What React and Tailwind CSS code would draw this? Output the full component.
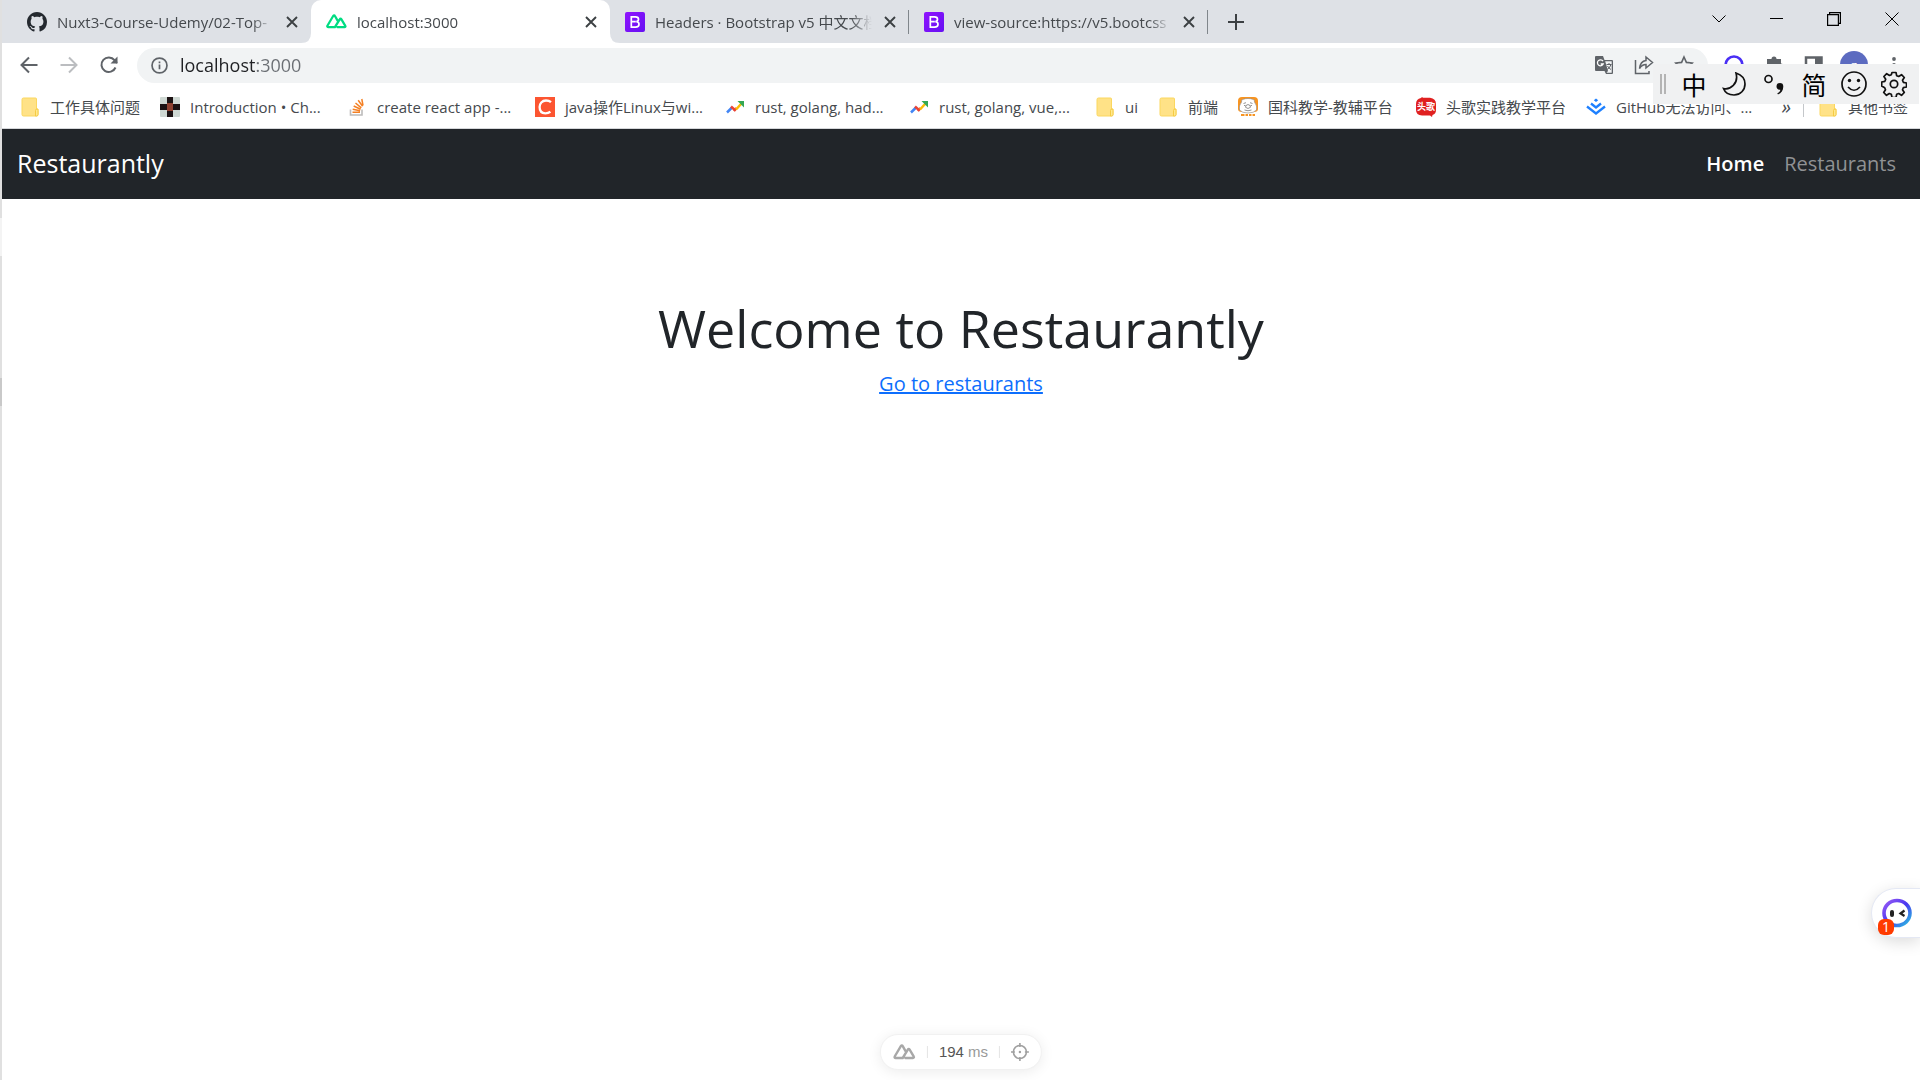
import React from "react";

const cjk = "font-['Open_Sans','Noto_Sans_CJK_SC',sans-serif]";

function GitHub() {
  return (
    <svg viewBox="0 0 16 16" className="size-5 shrink-0" fill="#24292f">
      <path d="M8 0C3.58 0 0 3.58 0 8c0 3.54 2.29 6.53 5.47 7.59.4.07.55-.17.55-.38 0-.19-.01-.82-.01-1.49-2.01.37-2.53-.49-2.69-.94-.09-.23-.48-.94-.82-1.13-.28-.15-.68-.52-.01-.53.63-.01 1.08.58 1.23.82.72 1.21 1.87.87 2.33.66.07-.52.28-.87.51-1.07-1.78-.2-3.64-.89-3.64-3.95 0-.87.31-1.59.82-2.15-.08-.2-.36-1.02.08-2.12 0 0 .67-.21 2.2.82.64-.18 1.32-.27 2-.27s1.36.09 2 .27c1.53-1.04 2.2-.82 2.2-.82.44 1.1.16 1.92.08 2.12.51.56.82 1.27.82 2.15 0 3.07-1.87 3.75-3.65 3.95.29.25.54.73.54 1.48 0 1.07-.01 1.93-.01 2.2 0 .21.15.46.55.38A8.01 8.01 0 0 0 16 8c0-4.42-3.58-8-8-8z" />
    </svg>
  );
}

function Nuxt({ color, className }) {
  return (
    <svg viewBox="0 0 22 16" className={className} fill="none" stroke={color} strokeWidth="2.400" strokeLinejoin="round" strokeLinecap="round">
      <path d="M12 14h7.6c.8 0 1.200-.8.8-1.400l-4.300-7.200c-.4-.6-1.200-.6-1.500 0L9.300 14H2.200c-.8 0-1.300-.8-.9-1.500L7.600 1.900c.4-.6 1.300-.6 1.600 0L12 6.800" />
    </svg>
  );
}

function Bootstrap() {
  return (
    <svg viewBox="0 0 20 20" className="size-5 shrink-0">
      <defs>
        <linearGradient id="bs" x1="0" y1="0" x2="1" y2="1">
          <stop offset="0" stopColor="#9013fe" />
          <stop offset="1" stopColor="#6610f2" />
        </linearGradient>
      </defs>
      <rect width="20" height="20" rx="2" fill="url(#bs)" />
      <path d="M6.300 4.800h4.200c2 0 3 .9 3 2.400 0 1.300-.9 2.200-2.200 2.400 1.700.1 2.700 1.200 2.700 2.600 0 1.900-1.300 2.900-3.500 2.900H6.300zM6.300 9.600h4.500" fill="none" stroke="#fff" strokeWidth="1.700" />
    </svg>
  );
}

function Folder() {
  return (
    <svg viewBox="0 0 20 20" className="size-5 shrink-0">
      <path d="M2 2.500Q2 1 3.500 1H15.500Q16.500 1 16.500 2V12h1.500v5.500Q18 19 16.500 19H3.500Q2 19 2 17.500z" fill="#ffe287" stroke="#fbd75f" strokeWidth="1" />
      <path d="M15.500 19v-5.500q0-1.500 1.500-1.500t1 1.500v4q0 1.500-1.500 1.500z" fill="#ffe98f" stroke="#f5cb44" strokeWidth="1" />
    </svg>
  );
}

function Checker() {
  return (
    <svg viewBox="0 0 20 20" className="size-5 shrink-0">
      <rect width="20" height="20" rx="1" fill="#cfd8d3" />
      <path d="M7 0h6v6H7zM0 7h7v6H0zM13 7h7v6h-7zM7 14h6v6H7z" fill="#1c1213" />
      <path d="M7 6h6v8H7z" fill="#8d4030" />
    </svg>
  );
}

function Stack() {
  return (
    <svg viewBox="0 0 20 20" className="size-5 shrink-0" fill="none">
      <path d="M3.500 12.500V18h11.500v-5.500" stroke="#bcbbbb" strokeWidth="1.600" />
      <path d="M5.500 15.300h7.500M5.700 12.200l7.400 1.500M6.700 9l6.900 3.200M8.500 6l5.800 4.900M11.200 3.200l4.400 6.100M14.800 2l1.200 6.500" stroke="#f48024" strokeWidth="1.500" />
    </svg>
  );
}

function CBox() {
  return (
    <svg viewBox="0 0 20 20" className="size-5 shrink-0">
      <path d="M0 0h20v20H0z" fill="#fc5531" />
      <path d="M16 5.200C14.500 3.900 12.900 3.500 11 3.500c-4 0-6.400 2.900-6.400 6.600 0 3.900 2.300 6.200 5.800 6.200 1.900 0 3.600-.5 5-1.500" fill="none" stroke="#fff" strokeWidth="2.300" />
    </svg>
  );
}

function Trend() {
  return (
    <svg viewBox="0 0 20 20" className="size-5 shrink-0" fill="none" strokeWidth="2.500">
      <path d="M2 15.500l5-5" stroke="#4285f4" />
      <path d="M6 9.500l4.500 4" stroke="#ea4335" />
      <path d="M9 14l2.500-3" stroke="#ea4335" />
      <path d="M11 12.500l5.500-6" stroke="#fbbc04" />
      <path d="M12.500 4H19v6.500z" fill="#34a853" />
    </svg>
  );
}

function Bear() {
  return (
    <svg viewBox="0 0 20 20" className="size-5 shrink-0">
      <path d="M4 0h12q4 0 4 4v8q0 3-4 3H4q-4 0-4-3V4q0-4 4-4z" fill="#f79421" />
      <path d="M3.500 5Q3 2 5.500 2.300 7 1.500 10 1.500t4.500.8Q17 2 16.500 5 19.500 9 18.500 13 16 16 10 16T1.500 13Q.5 9 3.500 5z" fill="#fff" stroke="#8b8179" strokeWidth=".6" />
      <path d="M5.500 6.500l2.500-.8M14.500 6.500L12 5.700M6 8.500h1.500M12.500 8.500H14M8 8.500q2-2 4 0t-2 3q-4-1-2-3zM6.500 13q3.500 1.500 7 0" fill="none" stroke="#777" strokeWidth=".8" />
      <path d="M3 18h3.500M7.500 18H10M11 18h2.500M14.500 18H17" stroke="#f79421" strokeWidth="2.200" />
    </svg>
  );
}

function TouGe() {
  return (
    <span className="relative flex size-5 shrink-0 items-center justify-center">
      <svg viewBox="0 0 20 20" className="absolute inset-0 size-5">
        <path d="M5 1l1-1 1 .8h7Q20 1.500 20 7v6q0 4-3.500 5l-.5 2-2-1.500H6Q0 18 0 13V7q0-5 5-6z" fill="#e02020" />
      </svg>
      <span className="relative font-['Noto_Sans_CJK_SC',sans-serif] text-[9px] leading-none font-bold text-white">头歌</span>
    </span>
  );
}

function Chevrons() {
  return (
    <svg viewBox="0 0 20 20" className="size-5 shrink-0" fill="none" stroke="#1e80ff" strokeWidth="2.300">
      <path d="M1 9.500l9 7 9-7M5 6.500l5 4 5-4" />
      <path d="M10 1.500l2.200 1.800L10 5.100 7.800 3.300z" fill="#1e80ff" stroke="none" />
    </svg>
  );
}

function Close() {
  return (
    <button aria-label="Close tab" className="flex size-5 shrink-0 items-center justify-center">
      <svg viewBox="0 0 12 12" className="size-3" stroke="#3c4043" strokeWidth="1.900">
        <path d="M1 1l10 10M11 1L1 11" />
      </svg>
    </button>
  );
}

function Tab({ icon, title, active, divider }) {
  return (
    <div className={"relative flex w-[299px] min-w-0 items-center pr-[9px] pl-[15px] " + (active ? "rounded-t-[10px] bg-white" : "")}>
      {active && (
        <>
          <svg viewBox="0 0 10 10" className="absolute bottom-0 -left-2.5 size-2.5" fill="#fff"><path d="M10 0v10H0Q10 10 10 0z" /></svg>
          <svg viewBox="0 0 10 10" className="absolute -right-2.5 bottom-0 size-2.5" fill="#fff"><path d="M0 0v10h10Q0 10 0 0z" /></svg>
        </>
      )}
      {icon}
      <span className="ml-2.5 min-w-0 flex-1 overflow-hidden mask-r-from-90% text-[15px] leading-6 whitespace-nowrap text-[#45494d]">{title}</span>
      <span className="ml-2"><Close /></span>
      {divider && <span className="absolute top-2.5 right-0 h-6 w-px bg-[#80868b]" />}
    </div>
  );
}

const bookmarks = [
  ["w-[140px]", <Folder />, "工作具体问题"],
  ["w-[187px]", <Checker />, "Introduction • Ch..."],
  ["w-[188px]", <Stack />, "create react app -..."],
  ["w-[190px]", <CBox />, "java操作Linux与wi..."],
  ["w-[184px]", <Trend />, "rust, golang, had..."],
  ["w-[186px]", <Trend />, "rust, golang, vue,..."],
  ["w-[63px]", <Folder />, "ui"],
  ["w-[80px]", <Folder />, "前端"],
  ["w-[178px]", <Bear />, "国科教学-教辅平台"],
  ["w-[170px]", <TouGe />, "头歌实践教学平台"],
  ["w-[180px]", <Chevrons />, "GitHub无法访问、..."],
];

function Key({ label, children }) {
  return <button aria-label={label} className="flex size-10 items-center justify-center">{children}</button>;
}

function InputBar() {
  return (
    <div className="absolute top-16 right-px flex h-10 items-center bg-[#f0f1f2] pr-[5px] font-['Noto_Sans_CJK_SC',sans-serif] text-[25px] leading-none text-black">
      <span className="mr-2 ml-[7px] h-5 w-1.5 border-x-2 border-[#b4b4b4]" />
      <Key label="Chinese">中</Key>
      <Key label="Half width">
        <svg viewBox="0 0 24 24" className="size-6" fill="none" stroke="#111" strokeWidth="1.700"><path d="M14 1C20 3 23 7 23 12c0 6-4.500 11-11 11-5 0-9-2.500-10.500-6.500C8 18 17 12 14 1z" /></svg>
      </Key>
      <Key label="Punctuation">
        <svg viewBox="0 0 24 24" className="size-6"><circle cx="6.500" cy="7" r="3.500" fill="none" stroke="#111" strokeWidth="1.700" /><path d="M14.500 14.500a3.400 3.400 0 0 1 6.800 0c0 4-2 6.500-5.300 8l-.7-1.200c2-.9 2.900-2 3-3.600-2.200.5-3.800-1.200-3.800-3.200z" fill="#111" /></svg>
      </Key>
      <Key label="Simplified">简</Key>
      <Key label="Emoji">
        <svg viewBox="0 0 26 26" className="size-[26px]" fill="none" stroke="#111" strokeWidth="1.700"><circle cx="13" cy="13" r="12" /><path d="M7 16q6 6.500 12 0" /><circle cx="8.500" cy="9.500" r="1.700" fill="#111" stroke="none" /><circle cx="17.500" cy="9.500" r="1.700" fill="#111" stroke="none" /></svg>
      </Key>
      <Key label="Settings">
        <svg viewBox="0 0 26 26" className="size-[26px]" fill="none" stroke="#111" strokeWidth="1.700" strokeLinejoin="round">
          <path d="M11 1.500h4l.7 3.200 2 .8 2.800-1.800 2.800 2.800-1.800 2.800.8 2 3.200.7v4l-3.200.7-.8 2 1.800 2.800-2.800 2.800-2.800-1.800-2 .8-.7 3.200h-4l-.7-3.200-2-.8-2.800 1.800-2.800-2.800 1.800-2.800-.8-2L.7 15v-4l3.200-.7.8-2L2.900 5.500l2.800-2.800 2.800 1.800 1.800-.8z" />
          <circle cx="13" cy="13" r="3.700" />
        </svg>
      </Key>
    </div>
  );
}

function TabStrip() {
  return (
    <div className="flex h-[43px] bg-[#dee1e6] pl-2.5">
      <Tab icon={<GitHub />} title="Nuxt3-Course-Udemy/02-Top-" />
      <Tab icon={<Nuxt color="#00dc82" className="h-[15px] w-[21px] shrink-0" />} title="localhost:3000" active />
      <Tab icon={<Bootstrap />} title="Headers · Bootstrap v5 中文文档" divider />
      <Tab icon={<Bootstrap />} title="view-source:https://v5.bootcss" divider />
      <button aria-label="New tab" className="flex w-14 items-center justify-center">
        <svg viewBox="0 0 16 16" className="size-4" stroke="#3c4043" strokeWidth="2"><path d="M8 0v16M0 8h16" /></svg>
      </button>
      <div className="ml-auto flex h-[37px] text-black">
        <button aria-label="Search tabs" className="flex w-14 items-center justify-center"><svg viewBox="0 0 14 8" className="h-2 w-3.5" fill="none" stroke="#000"><path d="M.5.500l6.500 6.500L13.500.500" /></svg></button>
        <button aria-label="Minimize" className="flex w-[58px] items-center justify-center"><span className="h-px w-[13px] bg-black" /></button>
        <button aria-label="Restore" className="flex w-[58px] items-center justify-center"><svg viewBox="0 0 14 14" className="size-3.5" fill="none" stroke="#000" strokeWidth="1.200"><path d="M.6 2.600h10.800v10.800H.6zM2.600 2.600V.6h10.800v10.800h-2" /></svg></button>
        <button aria-label="Close" className="flex w-[57px] items-center justify-center"><svg viewBox="0 0 14 14" className="size-3.5" stroke="#000"><path d="M.5.500l13 13M13.500.500l-13 13" /></svg></button>
      </div>
    </div>
  );
}

function Toolbar() {
  return (
    <div className="flex h-11 items-center pr-4 pl-[17px]">
      <div className="flex items-center gap-5">
        <button aria-label="Back"><svg viewBox="0 0 20 20" className="size-5" fill="none" stroke="#5f6368" strokeWidth="2"><path d="M18.500 10H3M10 2.500L2.500 10l7.500 7.500" /></svg></button>
        <button aria-label="Forward"><svg viewBox="0 0 20 20" className="size-5" fill="none" stroke="#bbbdc0" strokeWidth="2"><path d="M1.500 10H17M10 2.500l7.500 7.500-7.500 7.500" /></svg></button>
        <button aria-label="Reload"><svg viewBox="0 0 20 20" className="size-5" fill="none" stroke="#5f6368" strokeWidth="2"><path d="M16.500 12.500A7.300 7.300 0 1 1 15.500 5.200L18 8" /><path d="M18.500 1.500v7h-7z" fill="#5f6368" stroke="none" /></svg></button>
      </div>
      <div className="ml-[18px] flex h-[35px] flex-1 items-center rounded-full bg-[#f1f3f4] pr-3.5 pl-3.5">
        <svg viewBox="0 0 18 18" className="size-[17px] shrink-0" fill="none" stroke="#5f6368" strokeWidth="1.800"><circle cx="9" cy="9" r="7.900" /><path d="M9 8v5M9 4.700v1.800" /></svg>
        <input
          aria-label="Address"
          defaultValue="localhost:3000"
          className="ml-3 h-6 min-w-0 flex-1 bg-linear-to-r from-[#202124] from-[77px] to-[#6b6f74] to-[77px] bg-clip-text text-[18px] leading-6 text-transparent outline-none"
        />
        <div className="flex items-center gap-5">
          <button aria-label="Translate">
            <svg viewBox="0 0 20 20" className="size-5"><path d="M2 1h7l1.500 4H18q1 0 1 1v12q0 1-1 1h-6l-1.500-3H2q-1 0-1-1V2q0-1 1-1z" fill="#5f6368" /><path d="M11.200 6.300H17.700V17.700H12.500L14 16z" fill="#f1f3f4" /><path d="M9 6.200A3 3 0 1 0 9.200 9H6.700" fill="none" stroke="#fff" strokeWidth="1.300" /><path d="M12.500 9.500h5M15 8v1.500M17 9.500q-1 3.500-4 5M13.500 11q1.500 2.500 3.500 3.500" fill="none" stroke="#5f6368" /></svg>
          </button>
          <button aria-label="Share"><svg viewBox="0 0 20 20" className="size-5" fill="none" stroke="#5f6368" strokeWidth="1.500"><path d="M1.500 5v13.500h13.500V16M12 2l6.500 5.500L12 13v-3.500c-3 0-5 1.500-6.500 4C6 9 8 6 12 5.500z" /></svg></button>
          <button aria-label="Bookmark"><svg viewBox="0 0 20 20" className="size-5" fill="none" stroke="#5f6368" strokeWidth="1.600"><path d="M10 2l2.400 5.400 5.800.6-4.300 4 1.200 5.800-5.100-3-5.100 3 1.200-5.800-4.300-4 5.800-.6z" /></svg></button>
        </div>
      </div>
      <div className="ml-4 flex items-center gap-5">
        <button aria-label="Assistant"><svg viewBox="0 0 20 20" className="size-5"><circle cx="10" cy="10" r="8.500" fill="#fff" stroke="#4a2ff5" strokeWidth="2.600" /></svg></button>
        <button aria-label="Extensions"><svg viewBox="0 0 20 20" className="size-5" fill="#5f6368"><path d="M3 4h4.500a2.500 2.500 0 0 1 5 0H17v4.500a2.500 2.500 0 0 1 0 5V18H3z" /></svg></button>
        <button aria-label="Side panel"><svg viewBox="0 0 20 20" className="size-5"><path d="M2 2.500h15.500v15H2z" fill="#fff" stroke="#5f6368" strokeWidth="2.500" /><path d="M11 3h7v14h-7z" fill="#5f6368" /></svg></button>
        <button aria-label="Profile" className="-mx-1 flex size-7 items-center justify-center rounded-full bg-[#5c6bc0] text-[13px] leading-none text-white">z</button>
        <button aria-label="Menu"><svg viewBox="0 0 20 20" className="size-5" fill="#5f6368"><circle cx="10" cy="4" r="1.900" /><circle cx="10" cy="10" r="1.900" /><circle cx="10" cy="16" r="1.900" /></svg></button>
      </div>
    </div>
  );
}

function Bookmarks() {
  return (
    <div className={"flex h-[42px] items-center overflow-hidden border-b border-[#d5d7da] pr-3 pb-0.5 pl-[18px] text-[15px] leading-6 whitespace-nowrap text-[#45494d] " + cjk}>
      {bookmarks.map(([w, icon, label], i) => (
        <a key={i} href="#" className={"flex shrink-0 items-center gap-2.5 " + w}>{icon}{label}</a>
      ))}
      <button aria-label="More bookmarks" className="ml-auto text-[20px] italic">»</button>
      <span className="mr-3.5 ml-3 h-5 w-px bg-[#c4c7ca]" />
      <a href="#" className="flex shrink-0 items-center gap-2.5"><Folder />其他书签</a>
    </div>
  );
}

export default function App() {
  return (
    <div className={"flex min-h-screen bg-white " + cjk}>
      <div className="flex w-0.5 shrink-0 flex-col bg-[#e0e0e0]">
        <span className="h-[218px]" />
        <span className="h-[38px] bg-[#f4f4f4]" />
        <span className="h-[122px]" />
        <span className="h-7 bg-[#c9c9c9]" />
      </div>
      <div className="relative flex min-w-0 flex-1 flex-col">
        <TabStrip />
        <Toolbar />
        <Bookmarks />
        <InputBar />
        <nav className="flex h-[70px] items-center justify-between bg-[#212529] pr-6 pb-0.5 pl-[15px] text-white">
          <a href="#" className="text-[25px] leading-10 font-medium">Restaurantly</a>
          <div className="flex gap-5 pt-0.5 text-[20px] leading-8">
            <a href="#" className="font-semibold">Home</a>
            <a href="#" className="text-[#909294]">Restaurants</a>
          </div>
        </nav>
        <main className="flex flex-1 flex-col items-center pt-[97px] text-[#212529]">
          <h1 className="text-[52px] leading-[64px]">Welcome to Restaurantly</h1>
          <a href="#" className="mt-2 text-[20px] leading-8 text-[#0d6efd] underline">Go to restaurants</a>
        </main>
        <div className="absolute right-0 bottom-[142px] flex h-[50px] w-[49px] items-center rounded-l-full border border-r-0 border-[#e4e8f4] bg-white pl-2.5 shadow-[0_4px_16px_rgba(0,0,0,0.14)]">
          <svg viewBox="0 0 30 30" className="size-[30px]">
            <defs><linearGradient id="bot" x1="0" y1="0" x2="1" y2="1"><stop offset="0" stopColor="#9a5cf5" /><stop offset=".5" stopColor="#4836f0" /><stop offset="1" stopColor="#28c4e0" /></linearGradient></defs>
            <ellipse cx="15" cy="15" rx="13" ry="12.500" fill="#fff" stroke="url(#bot)" strokeWidth="3.600" />
            <rect x="8" y="12" width="4" height="7" rx="2" fill="#222" />
            <path d="M22.500 12.500l-4 3 4 2.500" fill="none" stroke="#222" strokeWidth="2.200" />
          </svg>
          <span className="absolute bottom-0.5 left-1.5 flex size-4 items-center justify-center rounded-[6px] bg-[#ff3b00] text-[14px] leading-none text-white">1</span>
        </div>
        <div className="absolute bottom-2.5 left-1/2 flex h-9 -translate-x-1/2 items-center rounded-full border border-[#f1f1f1] bg-white px-3 font-['Liberation_Sans',sans-serif] text-[15px] text-[#555] shadow-[0_2px_14px_rgba(0,0,0,0.08)]">
          <Nuxt color="#a8a8a8" className="h-4 w-[23px]" />
          <span className="mx-[11px] h-3 w-px bg-[#e4e4e4]" />
          <span>194 <span className="text-[#999]">ms</span></span>
          <span className="mx-[11px] h-3 w-px bg-[#e4e4e4]" />
          <svg viewBox="0 0 18 18" className="size-[18px]" fill="none" stroke="#a0a0a0" strokeWidth="1.600"><circle cx="9" cy="9" r="6.500" /><path d="M9 0v4M9 14v4M0 9h4M14 9h4" /><circle cx="9" cy="9" r="1.200" fill="#a0a0a0" stroke="none" /></svg>
        </div>
      </div>
    </div>
  );
}
